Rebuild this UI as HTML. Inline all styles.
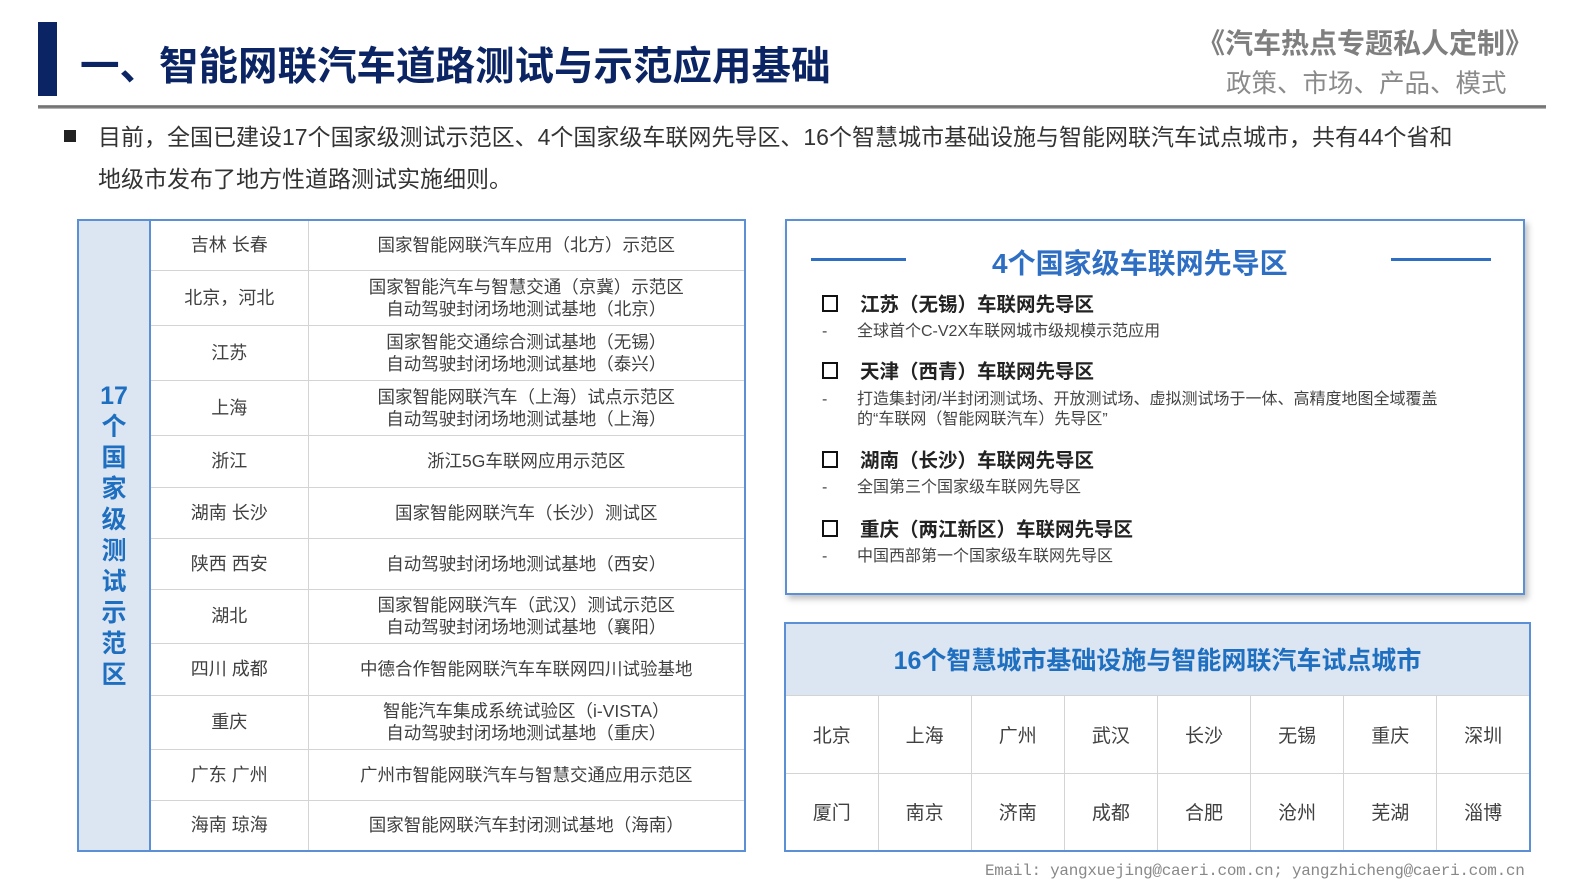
<!DOCTYPE html>
<html style="overflow:hidden"><head><meta charset="utf-8"><style>
*{margin:0;padding:0;box-sizing:border-box}
html,body{width:1587px;height:894px;overflow:hidden}
body{background:#fff;font-family:"Liberation Sans","Noto Sans CJK SC",sans-serif;color:#333}
#w{position:relative;width:1587px;height:894px;overflow:hidden}
.a{position:absolute}
table{border-collapse:collapse}
#lt{position:absolute;left:77px;top:219px;width:669px;height:632px;border:2px solid #5b8fd6}
#lt td{border:1.5px solid #d4d4d4;text-align:center;font-size:18px;color:#404040;line-height:22px}
#lt td.s{font-size:17.5px}
#lt td.h{background:#dce6f2;color:#1f6fc0;font-weight:bold;font-size:25px;line-height:31px;border:none;border-right:2px solid #5b8fd6}
#ct{position:absolute;left:784px;top:622px;width:747px;height:229px;border:2px solid #5b8fd6}
#ct td{border:1.5px solid #d4d4d4;text-align:center;font-size:19px;color:#404040;width:93px}
.it{position:absolute;left:822px;font-size:19.5px;font-weight:bold;color:#222;white-space:nowrap}
.it:before{content:"";display:inline-block;width:12px;height:13px;border:2.5px solid #111;margin-right:22px;vertical-align:-1px}
.sb{position:absolute;left:822px;font-size:16px;color:#444;line-height:20px}
.sb span{position:absolute;left:35px;white-space:nowrap}
</style></head><body><div id="w">
<div class="a" style="left:38px;top:22px;width:19px;height:74px;background:#0b2463"></div>
<div class="a" style="left:80px;top:35px;font-size:39.5px;font-weight:bold;color:#0b2463;white-space:nowrap">一、智能网联汽车道路测试与示范应用基础</div>
<div class="a" style="left:1197px;top:22px;font-size:28px;font-weight:bold;color:#7f7f7f;white-space:nowrap">《汽车热点专题私人定制》</div>
<div class="a" style="left:1226px;top:63px;font-size:25.5px;color:#8a8a8a;white-space:nowrap">政策、市场、产品、模式</div>
<div class="a" style="left:38px;top:105px;width:1508px;height:4px;background:linear-gradient(#999,#666,#ccc)"></div>
<div class="a" style="left:64px;top:130px;width:12px;height:12px;background:#222"></div>
<div class="a" style="left:98px;top:116px;font-size:23px;color:#333;line-height:42px;width:1420px;white-space:nowrap">目前，全国已建设17个国家级测试示范区、4个国家级车联网先导区、16个智慧城市基础设施与智能网联汽车试点城市，共有44个省和<br>地级市发布了地方性道路测试实施细则。</div>

<table id="lt">
<tr style="height:50px"><td class="h" rowspan="12" style="width:72px">17<br>个<br>国<br>家<br>级<br>测<br>试<br>示<br>范<br>区</td><td style="width:158px">吉林 长春</td><td class="s">国家智能网联汽车应用（北方）示范区</td></tr>
<tr style="height:55px"><td>北京，河北</td><td class="s">国家智能汽车与智慧交通（京冀）示范区<br>自动驾驶封闭场地测试基地（北京）</td></tr>
<tr style="height:55px"><td>江苏</td><td class="s">国家智能交通综合测试基地（无锡）<br>自动驾驶封闭场地测试基地（泰兴）</td></tr>
<tr style="height:55px"><td>上海</td><td class="s">国家智能网联汽车（上海）试点示范区<br>自动驾驶封闭场地测试基地（上海）</td></tr>
<tr style="height:52px"><td>浙江</td><td class="s">浙江5G车联网应用示范区</td></tr>
<tr style="height:51px"><td>湖南 长沙</td><td class="s">国家智能网联汽车（长沙）测试区</td></tr>
<tr style="height:51px"><td>陕西 西安</td><td class="s">自动驾驶封闭场地测试基地（西安）</td></tr>
<tr style="height:54px"><td>湖北</td><td class="s">国家智能网联汽车（武汉）测试示范区<br>自动驾驶封闭场地测试基地（襄阳）</td></tr>
<tr style="height:52px"><td>四川 成都</td><td class="s">中德合作智能网联汽车车联网四川试验基地</td></tr>
<tr style="height:54px"><td>重庆</td><td class="s">智能汽车集成系统试验区（i-VISTA）<br>自动驾驶封闭场地测试基地（重庆）</td></tr>
<tr style="height:51px"><td>广东 广州</td><td class="s">广州市智能网联汽车与智慧交通应用示范区</td></tr>
<tr style="height:51px"><td>海南 琼海</td><td class="s">国家智能网联汽车封闭测试基地（海南）</td></tr>
</table>

<div class="a" style="left:785px;top:219px;width:740px;height:376px;border:2px solid #5b8fd6;box-shadow:3px 4px 6px rgba(0,0,0,0.25)"></div>
<div class="a" style="left:811px;top:258px;width:95px;height:3px;background:#2e6fc4"></div>
<div class="a" style="left:1391px;top:258px;width:100px;height:3px;background:#2e6fc4"></div>
<div class="a" style="left:992px;top:242px;font-size:28px;font-weight:bold;color:#2e6fc4;white-space:nowrap">4个国家级车联网先导区</div>
<div class="it" style="top:288px">江苏（无锡）车联网先导区</div>
<div class="sb" style="top:322px">-<span>全球首个C-V2X车联网城市级规模示范应用</span></div>
<div class="it" style="top:355px">天津（西青）车联网先导区</div>
<div class="sb" style="top:390px">-<span>打造集封闭/半封闭测试场、开放测试场、虚拟测试场于一体、高精度地图全域覆盖<br>的“车联网（智能网联汽车）先导区”</span></div>
<div class="it" style="top:444px">湖南（长沙）车联网先导区</div>
<div class="sb" style="top:478px">-<span>全国第三个国家级车联网先导区</span></div>
<div class="it" style="top:513px">重庆（两江新区）车联网先导区</div>
<div class="sb" style="top:547px">-<span>中国西部第一个国家级车联网先导区</span></div>

<table id="ct">
<tr style="height:72px"><td colspan="8" style="background:#dce6f2;color:#1f6fc0;font-weight:bold;font-size:25px;border:none">16个智慧城市基础设施与智能网联汽车试点城市</td></tr>
<tr style="height:78px"><td>北京</td><td>上海</td><td>广州</td><td>武汉</td><td>长沙</td><td>无锡</td><td>重庆</td><td>深圳</td></tr>
<tr style="height:78px"><td>厦门</td><td>南京</td><td>济南</td><td>成都</td><td>合肥</td><td>沧州</td><td>芜湖</td><td>淄博</td></tr>
</table>
<div class="a" style="left:985px;top:862px;font-family:'Liberation Mono',monospace;font-size:16px;color:#888;white-space:nowrap;letter-spacing:-0.3px">Email: yangxuejing@caeri.com.cn; yangzhicheng@caeri.com.cn</div>
</div></body></html>
